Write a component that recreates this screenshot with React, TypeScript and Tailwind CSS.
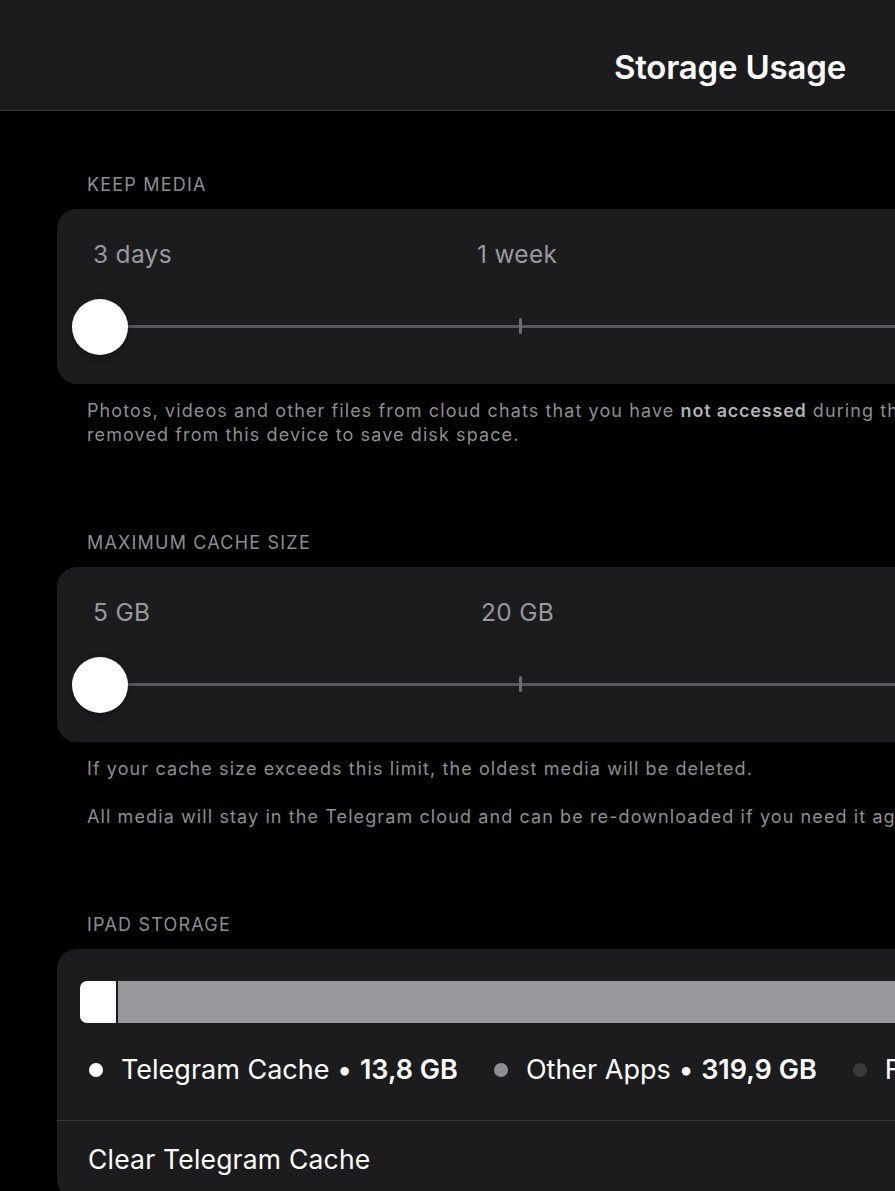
const font = { fontFamily: "Inter, 'Noto Sans', sans-serif" };

function SectionLabel({ text }: { text: string }) {
  return (
    <div className="h-6 pl-[87px] text-[18px] leading-6 tracking-[1.2px] text-[#8e8e93]">
      {text}
    </div>
  );
}

interface SliderCardProps {
  labels: { text: string; left: number }[];
}

function SliderCard({ labels }: SliderCardProps) {
  return (
    <div className="relative ml-[57px] h-[175px] w-[1100px] rounded-[20px] bg-[#1c1c1e]">
      {labels.map((l, i) => (
        <span
          key={i}
          className="absolute top-[31px] text-[24.5px] leading-7 tracking-[0.3px] text-[#98989e]"
          style={{ left: l.left }}
        >
          {l.text}
        </span>
      ))}
      {/* track */}
      <div className="absolute left-[43px] right-0 top-[116px] h-[3px] bg-[#58585c]" />
      <div className="absolute left-[462px] top-[109px] h-[16px] w-[3px] rounded-full bg-[#6e6e73]" />
      {/* thumb */}
      <div className="absolute left-[15px] top-[90px] h-[56px] w-[56px] rounded-full bg-white shadow-[0_2px_6px_rgba(0,0,0,0.3)]" />
    </div>
  );
}

function Footnote({ children }: { children: React.ReactNode }) {
  return (
    <p className="w-[1200px] whitespace-nowrap pl-[87px] text-[18px] leading-6 tracking-[1.1px] text-[#8e8e93]">
      {children}
    </p>
  );
}

function LegendItem({
  dot,
  label,
  value,
}: {
  dot: string;
  label: string;
  value: string;
}) {
  return (
    <div className="flex shrink-0 items-center">
      <span className={`h-[14px] w-[14px] rounded-full ${dot}`} />
      <span className="ml-[18px] whitespace-nowrap text-[27px] leading-8 text-white">
        {label} • <span className="font-semibold">{value}</span>
      </span>
    </div>
  );
}

export default function App() {
  return (
    <div
      className="h-[1191px] w-[895px] overflow-hidden bg-black"
      style={font}
    >
      <div className="flex h-[111px] items-start justify-end border-b border-[#3a3a3c] bg-[#1c1c1e] pr-[49px] pt-[47px]">
        <h1 className="text-[33px] font-semibold leading-10 tracking-[-0.2px] text-white">
          Storage Usage
        </h1>
      </div>

      <div className="mt-[62px]">
        <SectionLabel text="KEEP MEDIA" />
      </div>
      <div className="mt-3">
        <SliderCard
          labels={[
            { text: "3 days", left: 36 },
            { text: "1 week", left: 420 },
          ]}
        />
      </div>
      <div className="mt-[15px]">
        <Footnote>
          Photos, videos and other files from cloud chats that you have{" "}
          <span className="font-semibold tracking-[0.8px] text-[#b0b0b5]">
            not accessed
          </span>{" "}
          during this period will be
          <br />
          removed from this device to save disk space.
        </Footnote>
      </div>

      <div className="mt-[84px]">
        <SectionLabel text="MAXIMUM CACHE SIZE" />
      </div>
      <div className="mt-3">
        <SliderCard
          labels={[
            { text: "5 GB", left: 36 },
            { text: "20 GB", left: 424 },
          ]}
        />
      </div>
      <div className="mt-[15px]">
        <Footnote>
          If your cache size exceeds this limit, the oldest media will be
          deleted.
        </Footnote>
      </div>
      <div className="mt-6">
        <Footnote>
          All media will stay in the Telegram cloud and can be re-downloaded if
          you need it again.
        </Footnote>
      </div>

      <div className="mt-[84px]">
        <SectionLabel text="IPAD STORAGE" />
      </div>
      <div className="mt-3 ml-[57px] w-[1100px] rounded-[20px] bg-[#1c1c1e]">
        <div className="px-[23px] pt-8">
          <div className="flex h-[42px] overflow-hidden rounded-[7px]">
            <div className="w-[36px] bg-white" />
            <div className="w-[2px] bg-[#1c1c1e]" />
            <div className="flex-1 bg-[#98989d]" />
          </div>
        </div>
        <div className="flex h-[97px] items-center gap-[36px] pl-[32px] pb-[3px]">
          <LegendItem dot="bg-white" label="Telegram Cache" value="13,8 GB" />
          <LegendItem dot="bg-[#8e8e93]" label="Other Apps" value="319,9 GB" />
          <LegendItem dot="bg-[#3a3a3c]" label="Free" value="102,3 GB" />
        </div>
        <div className="h-px bg-[#38383a]" />
        <div className="flex h-[78px] items-center pl-[31px] text-[26.5px] tracking-[0.2px] text-white">
          Clear Telegram Cache
        </div>
      </div>
    </div>
  );
}
